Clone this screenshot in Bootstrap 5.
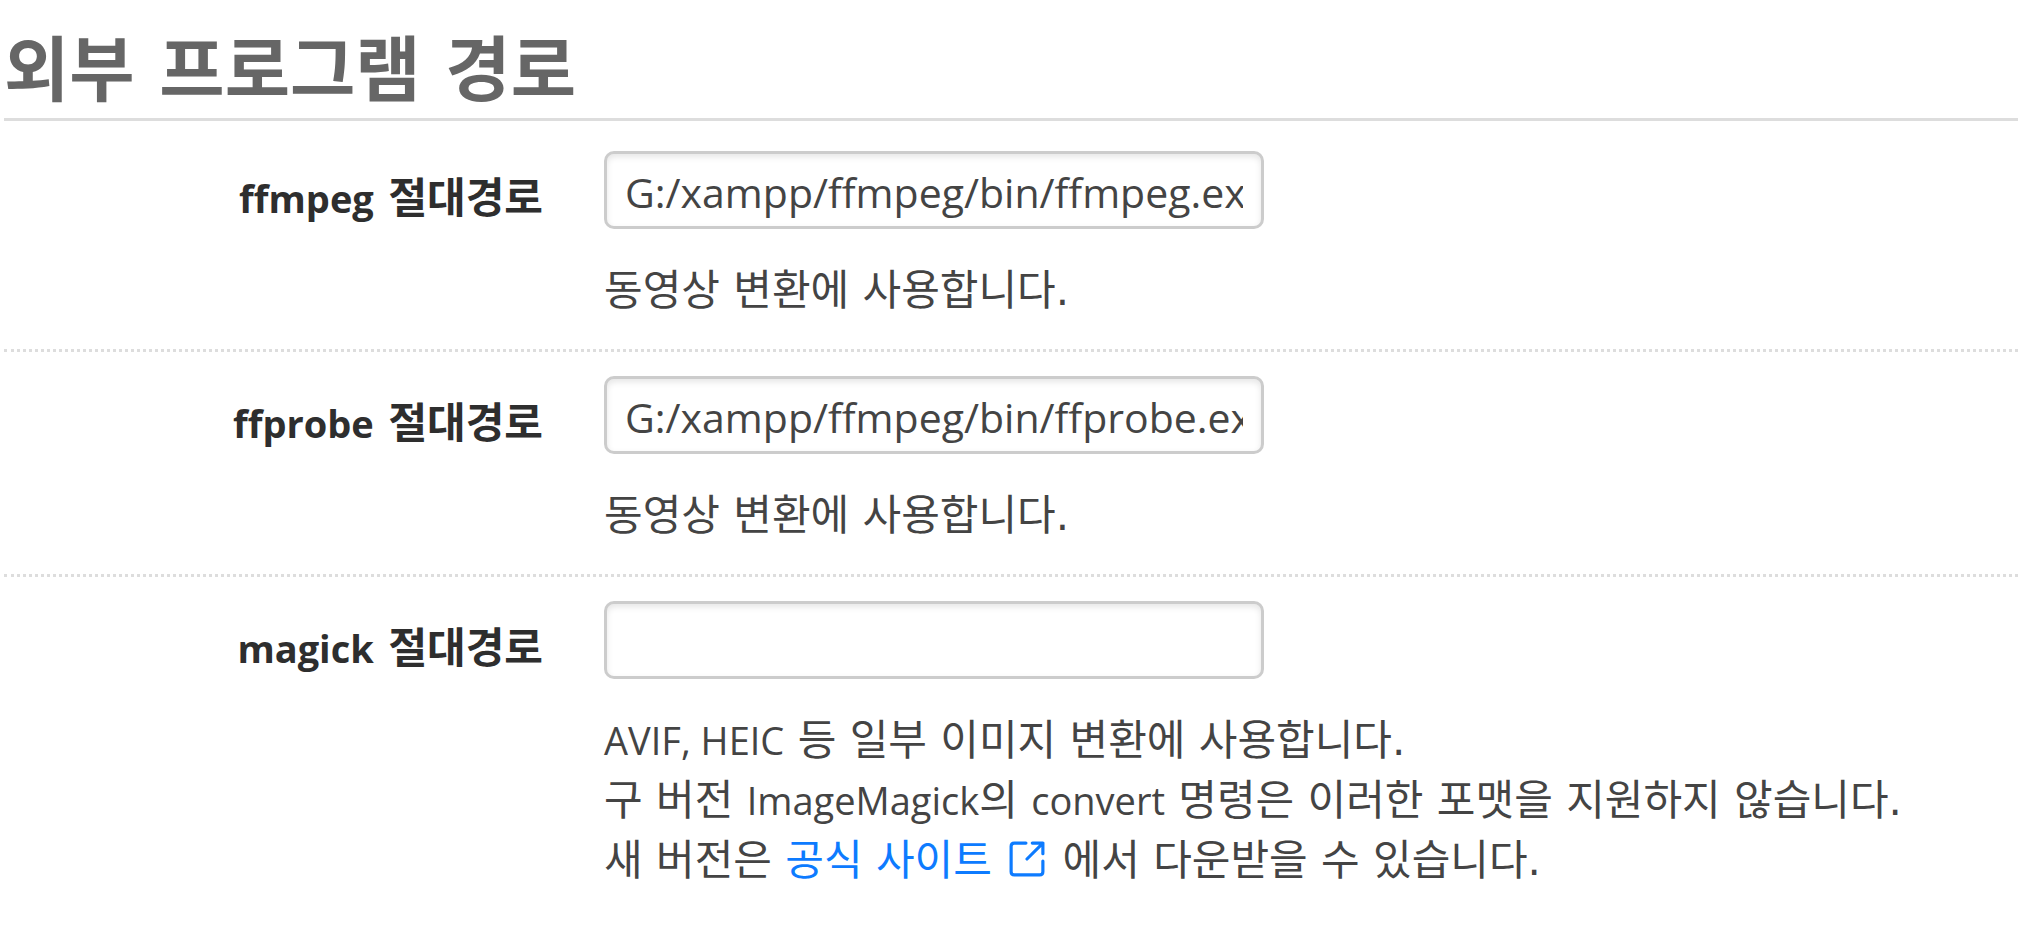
<!DOCTYPE html>
<html lang="ko">
<head>
<meta charset="utf-8">
<meta name="viewport" content="width=device-width, initial-scale=1">
<title>외부 프로그램 경로</title>
<link href="https://cdn.jsdelivr.net/npm/bootstrap@5.3.0/dist/css/bootstrap.min.css" rel="stylesheet">
<style>
  body { font-family: "DejaVu Sans", "Noto Sans CJK KR", sans-serif; font-size: 42px; line-height: 60px; color: #444; background: #fff; }
  .settings { padding: 24px 0 24px 4px; }
  .settings-title { font-size: 71px; line-height: 94px; font-weight: 700; color: #666; border-bottom: 3px solid #ddd; }
  .setting { padding: 24px 0 28px; column-gap: 61px; }
  .settings-title + .setting { padding-top: 30px; }
  .setting + .setting { border-top: 3px dotted #ddd; }
  .setting-label { width: 539px; padding-top: 18px; color: #2e2e2e; font-weight: 700; }
  .setting-body { min-width: 0; }
  .latin { font-family: "Open Sans", sans-serif; font-size: 38px; line-height: 1; }
  .path-input { width: 660px; max-width: 100%; height: 78px; padding: 17px 18px 13px; border: 3px solid #ccc; border-radius: 10px; font-family: "Open Sans", "Noto Sans CJK KR", sans-serif; font-size: 41px; line-height: 42px; color: #444; box-shadow: inset 0 3px 6px rgba(0,0,0,.1); }
  .path-input:focus { border-color: #8ab8ff; color: #444; }
  .help { margin-top: 32px; }
  .help a { color: #0d7bff; }
  .external { width: 36px; height: 36px; margin: 0 4px; vertical-align: -2px; }
  @media (max-width: 1200px) {
    .setting { flex-direction: column; row-gap: 12px; padding-right: 4px; }
    .setting-label { width: auto; text-align: left !important; }
  }
</style>
</head>
<body>
<main class="settings">
  <form>
    <h1 class="settings-title mb-0">외부 프로그램 경로</h1>
    <div class="setting d-flex">
      <label class="setting-label flex-shrink-0 text-end" for="ffmpeg"><span class="latin">ffmpeg</span> 절대경로</label>
      <div class="setting-body flex-grow-1">
        <input class="form-control path-input" type="text" id="ffmpeg" value="G:/xampp/ffmpeg/bin/ffmpeg.exe">
        <p class="help mb-0">동영상 변환에 사용합니다.</p>
      </div>
    </div>
    <div class="setting d-flex">
      <label class="setting-label flex-shrink-0 text-end" for="ffprobe"><span class="latin">ffprobe</span> 절대경로</label>
      <div class="setting-body flex-grow-1">
        <input class="form-control path-input" type="text" id="ffprobe" value="G:/xampp/ffmpeg/bin/ffprobe.exe">
        <p class="help mb-0">동영상 변환에 사용합니다.</p>
      </div>
    </div>
    <div class="setting d-flex">
      <label class="setting-label flex-shrink-0 text-end" for="magick"><span class="latin">magick</span> 절대경로</label>
      <div class="setting-body flex-grow-1">
        <input class="form-control path-input" type="text" id="magick">
        <p class="help mb-0"><span class="latin">AVIF, HEIC</span> 등 일부 이미지 변환에 사용합니다.<br>
          구 버전 <span class="latin">ImageMagick</span>의 <span class="latin">convert</span> 명령은 이러한 포맷을 지원하지 않습니다.<br>
          새 버전은 <a class="text-decoration-none" href="#">공식 사이트 <svg class="external" viewBox="0 0 34 34" fill="none" stroke="currentColor" stroke-width="3" stroke-linecap="round" stroke-linejoin="round" aria-hidden="true"><path d="M16 2H5Q2 2 2 5V29Q2 32 5 32H29Q32 32 32 29V19M17 17L32 2M22 2H32V12"/></svg></a> 에서 다운받을 수 있습니다.</p>
      </div>
    </div>
  </form>
</main>
<script src="https://cdn.jsdelivr.net/npm/bootstrap@5.3.0/dist/js/bootstrap.bundle.min.js"></script>
</body>
</html>
